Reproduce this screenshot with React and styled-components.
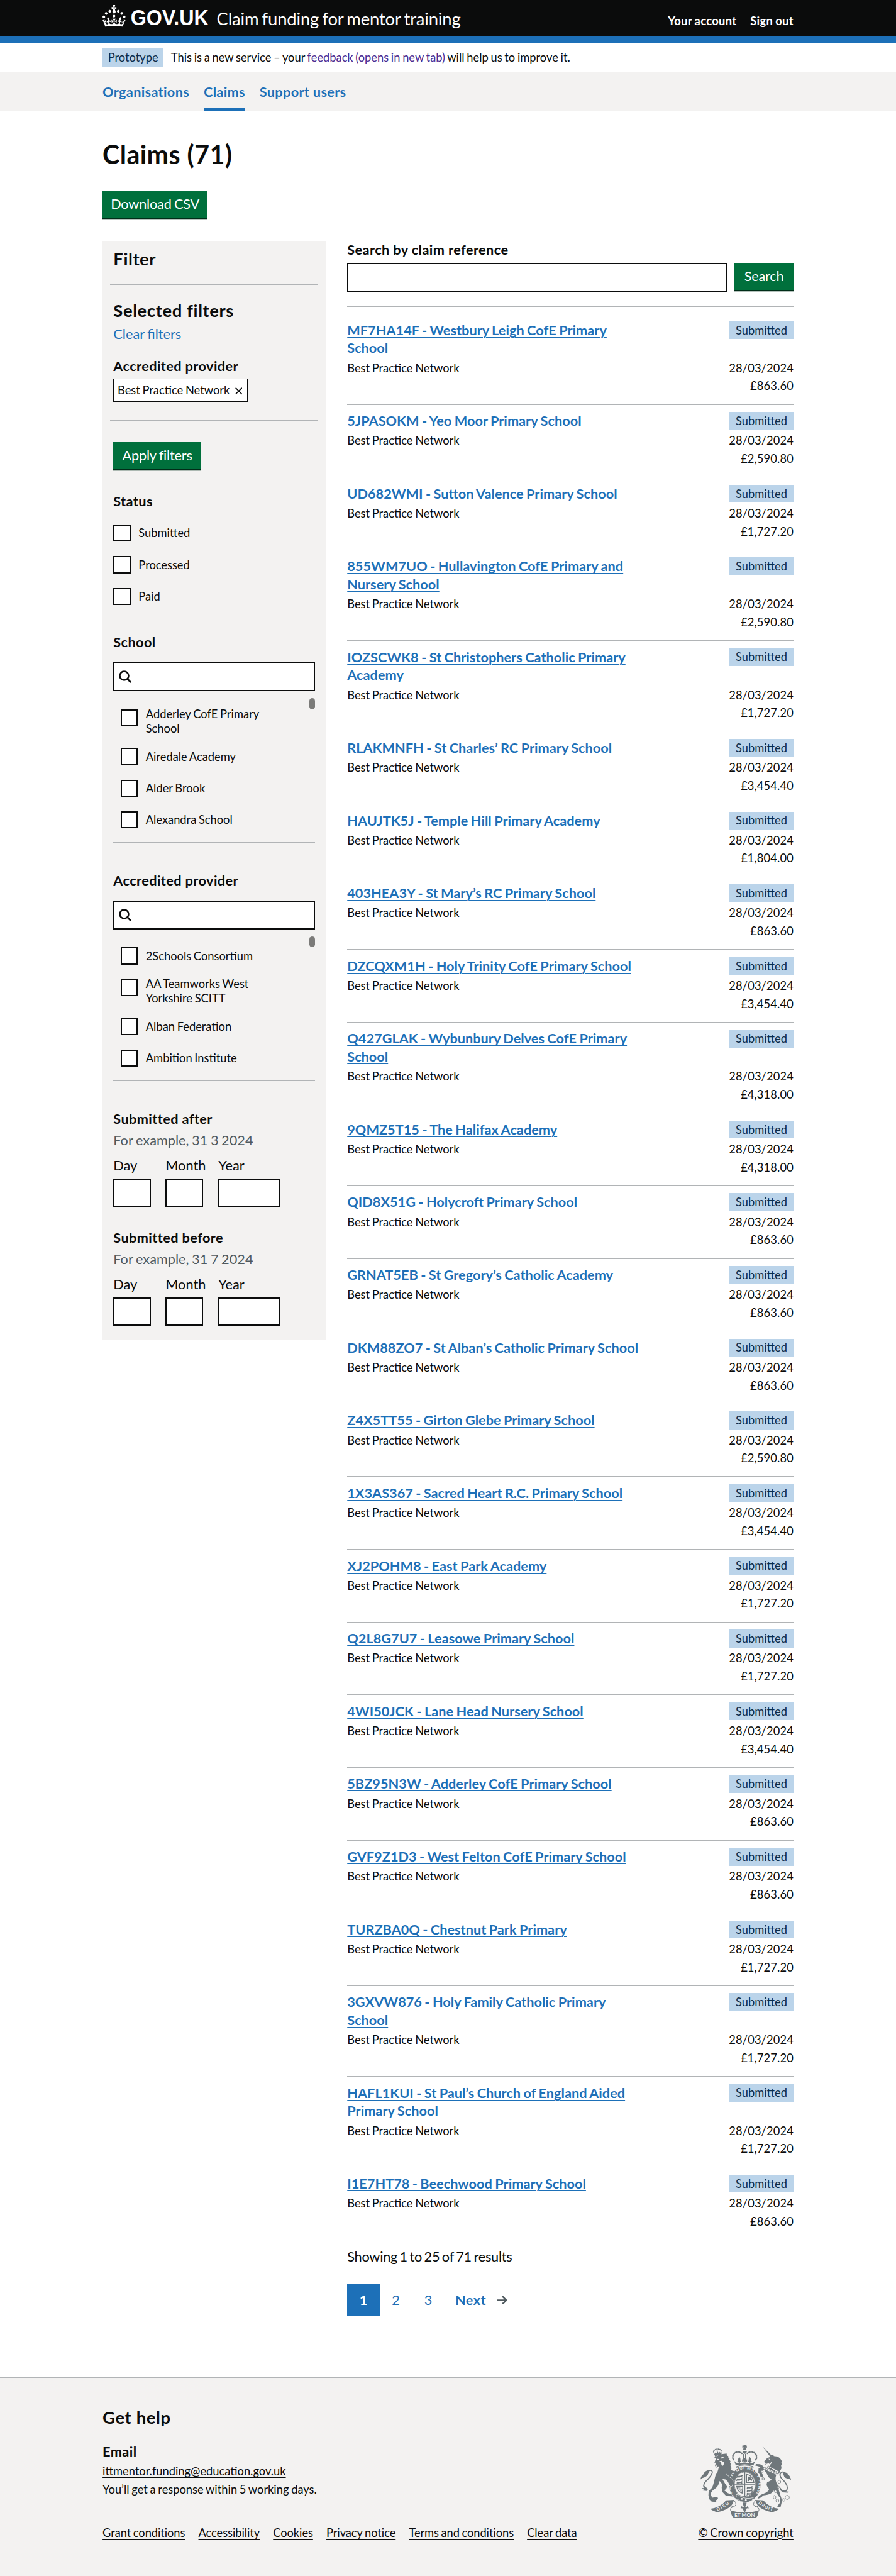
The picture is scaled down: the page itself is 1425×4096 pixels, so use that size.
import React from "react";
import styled, { createGlobalStyle, css } from "styled-components";

/* 1rem = 10 design pixels */
const Global = createGlobalStyle`
  html { font-size: 11.4458px; -webkit-text-size-adjust: none; }
  body {
    margin: 0;
    background: #fff;
    color: #0b0c0c;
    font-family: Lato, "Noto Sans", sans-serif;
    font-size: 1.9rem;
    line-height: 2.5rem;
    word-spacing: -0.045em;
  }
  *, *::before, *::after { box-sizing: border-box; }
  h1, h2, h3, p, ul { margin: 0; padding: 0; }
  ul { list-style: none; }
`;

const Width = styled.div`
  width: 96rem;
  margin: 0 auto;
`;

const underlined = css`
  text-decoration: underline;
  text-decoration-thickness: 1px;
  text-underline-offset: 0.1578em;
`;

/* ---------- header ---------- */
const Header = styled.header`
  height: 6rem;
  background: #0b0c0c;
  border-bottom: 1rem solid #1d70b8;
  color: #fff;
`;
const HeaderRow = styled(Width)`
  display: flex;
  align-items: flex-start;
`;
const Logo = styled.svg`
  display: block;
  width: 14.8rem;
  height: 3rem;
  margin-top: 0.7rem;
  flex: none;
  overflow: visible;
`;
const ServiceName = styled.span`
  margin: 1.15rem 0 0 1.05rem;
  font-size: 2.4rem;
  line-height: 3rem;
  letter-spacing: -0.006em;
  word-spacing: -0.06em;
  white-space: nowrap;
`;
const Account = styled.nav`
  display: flex;
  gap: 1.9rem;
  margin: 1.95rem 0 0 auto;
  font-size: 1.6rem;
  line-height: 2rem;
  font-weight: 700;
  letter-spacing: 0.02em;
`;

/* ---------- phase banner ---------- */
const Phase = styled(Width)`
  height: 4rem;
  display: flex;
  align-items: center;
  gap: 1rem;
  font-size: 1.6rem;
  line-height: 2rem;
`;
const Tag = styled.strong`
  display: inline-flex;
  align-items: center;
  justify-content: center;
  width: ${(p) => p.$w};
  height: 2.5rem;
  flex: none;
  background: #bbd4ea;
  color: #0c2d4a;
  font-size: 1.6rem;
  line-height: 2rem;
  font-weight: 400;
`;
const Feedback = styled.a`
  ${underlined}
  color: #4c2c92;
`;

/* ---------- primary navigation ---------- */
const NavBar = styled.nav`
  height: 5.5rem;
  background: #f3f2f1;
`;
const NavRow = styled(Width)`
  display: flex;
  gap: 2rem;
  height: 100%;
`;
const NavLink = styled.a`
  display: flex;
  align-items: center;
  height: 100%;
  padding-top: ${(p) => (p.$current ? "0.5rem" : "0")};
  border-bottom: ${(p) => (p.$current ? "0.5rem solid #1d70b8" : "0")};
  color: #1d70b8;
  font-weight: 700;
  letter-spacing: 0.014em;
  word-spacing: 0;
`;

/* ---------- shared ---------- */
const Main = styled.main`
  padding-top: 4rem;
`;
const Title = styled.h1`
  margin-bottom: 3rem;
  font-size: 3.6rem;
  line-height: 4rem;
  font-weight: 700;
  letter-spacing: 0.01em;
  word-spacing: 0;
`;
const Button = styled.button`
  display: flex;
  align-items: center;
  justify-content: center;
  width: ${(p) => p.$w};
  height: ${(p) => p.$h || "3.8rem"};
  margin: 0;
  padding: 0;
  flex: none;
  border: 0;
  background: #00703c;
  box-shadow: 0 0.2rem 0 #002d18;
  color: #fff;
  font: inherit;
  line-height: 1.9rem;
  word-spacing: inherit;
  letter-spacing: -0.01em;
`;
const Columns = styled.div`
  display: flex;
  align-items: flex-start;
  gap: 3rem;
  margin-top: 3.2rem;
`;
const Heading = styled.h2`
  font-size: ${(p) => (p.$large ? "2.4rem" : "1.9rem")};
  line-height: ${(p) => (p.$large ? "3rem" : "2.5rem")};
  font-weight: 700;
  letter-spacing: ${(p) => (p.$large ? "0.022em" : "0.018em")};
  word-spacing: 0;
`;
const Box = styled.input`
  display: block;
  width: ${(p) => p.$w};
  height: 4rem;
  margin: 0;
  padding: 0.5rem;
  border: 0.2rem solid #0b0c0c;
  border-radius: 0;
  background: #fff;
`;

/* ---------- filter panel ---------- */
const Filter = styled.aside`
  width: 31rem;
  flex: none;
  padding: 1rem 1rem 2rem;
  background: #f3f2f1;
`;
const FilterHead = styled.div`
  padding: 0 0.5rem 2rem;
  border-bottom: 1px solid #b1b4b6;
`;
const Selected = styled.div`
  padding: 2.05rem 0.5rem 2.5rem;
  border-bottom: 1px solid #b1b4b6;
`;
const ClearLink = styled.a`
  ${underlined}
  display: inline-block;
  margin: 0.5rem 0 2rem;
  color: #1d70b8;
`;
const Chip = styled.span`
  display: flex;
  align-items: center;
  gap: 0.75rem;
  width: 18.7rem;
  height: 3.2rem;
  margin-top: 0.5rem;
  padding: 0 0.5rem;
  border: 1px solid #0b0c0c;
  background: #fff;
  font-size: 1.6rem;
  line-height: 2rem;
  white-space: nowrap;
`;
const Cross = styled.svg`
  width: 1rem;
  height: 1rem;
  margin-top: 0.2rem;
`;
const Options = styled.div`
  padding: 3rem 0.5rem 0;
`;
const Group = styled.fieldset`
  margin: 0;
  padding: 0;
  border: 0;
  min-width: 0;
`;
const StatusGroup = styled(Group)`
  margin: 3.2rem 0 2.95rem;
`;
const StatusList = styled.ul`
  margin-top: 0.95rem;
`;
const SearchGroup = styled(Group)`
  margin-bottom: 4rem;
`;
const SearchBox = styled.div`
  display: flex;
  align-items: center;
  height: 4rem;
  margin: 1.5rem 0 1rem;
  padding-left: 0.6rem;
  border: 0.2rem solid #0b0c0c;
  background: #fff;
`;
const Scroller = styled.div`
  display: flex;
  justify-content: space-between;
  height: 20.1rem;
  padding-left: 1rem;
  border-bottom: 1px solid #b1b4b6;
`;
const ScrollList = styled.ul`
  padding-top: 0.5rem;
`;
const Thumb = styled.span`
  width: 0.75rem;
  height: 1.5rem;
  border-radius: 0.4rem;
  background: #7b7b79;
`;
const Item = styled.li`
  display: flex;
  min-height: 4.4rem;
`;
const Check = styled.span`
  width: 2.4rem;
  height: 2.4rem;
  margin-top: 1rem;
  flex: none;
  border: 0.2rem solid #0b0c0c;
  background: #fff;
`;
const CheckLabel = styled.label`
  align-self: center;
  padding: 0.7rem 0 0.7rem 1.1rem;
  font-size: 1.6rem;
  line-height: 2rem;
  white-space: pre;
`;
const DateGroup = styled(Group)`
  & + & { margin-top: 3rem; }
`;
const Hint = styled.p`
  margin: 0.5rem 0 1rem;
  color: #505a5f;
`;
const DateRow = styled.div`
  display: flex;
  gap: 2rem;
`;
const DateField = styled.div`
  display: flex;
  flex-direction: column;
  gap: 0.5rem;
  width: ${(p) => p.$w};
`;

/* ---------- results ---------- */
const Results = styled.section`
  flex: 1;
  min-width: 0;
`;
const SearchRow = styled.div`
  display: flex;
  justify-content: space-between;
  margin: 0.5rem 0 2.05rem;
`;
const ClaimList = styled.ul`
  padding-top: 1rem;
  border-top: 1px solid #b1b4b6;
`;
const Claim = styled.li`
  padding: 1rem 0;
  border-bottom: 1px solid #b1b4b6;
  height: ${(p) => (p.$tall ? "12.604rem" : "10.104rem")};
`;
const ClaimRow = styled.div`
  display: flex;
  justify-content: space-between;
  align-items: flex-start;
  margin-bottom: 0.5rem;
`;
const ClaimLink = styled.a`
  ${underlined}
  color: #1d70b8;
  font-weight: 700;
  word-spacing: -0.04em;
  white-space: pre;
`;
const Meta = styled.span`
  font-size: 1.6rem;
  line-height: 2rem;
  letter-spacing: ${(p) => (p.$num ? "0.006em" : "0")};
`;
const Amount = styled(Meta)`
  display: block;
  text-align: right;
`;
const Showing = styled.p`
  margin: 1.05rem 0 2.5rem;
  letter-spacing: -0.012em;
  word-spacing: -0.08em;
`;
const Pages = styled.nav`
  display: flex;
  align-items: center;
  height: 4.5rem;
`;
const Page = styled.a`
  ${underlined}
  display: flex;
  align-items: center;
  justify-content: center;
  width: 4.5rem;
  height: 4.5rem;
  background: ${(p) => (p.$current ? "#1d70b8" : "transparent")};
  color: ${(p) => (p.$current ? "#fff" : "#1d70b8")};
  font-weight: ${(p) => (p.$current ? 700 : 400)};
`;
const Next = styled.a`
  ${underlined}
  margin: 0 1.5rem;
  color: #1d70b8;
  font-weight: 700;
  letter-spacing: 0.02em;
`;
const Arrow = styled.svg`
  width: 1.5rem;
  height: 1.3rem;
`;

/* ---------- footer ---------- */
const Footer = styled.footer`
  height: 27.6rem;
  margin-top: 8.5rem;
  padding-top: 4rem;
  border-top: 1px solid #b1b4b6;
  background: #f3f2f1;
`;
const FooterRow = styled(Width)`
  display: flex;
  justify-content: space-between;
`;
const FooterBody = styled.div`
  display: flex;
  flex-direction: column;
  align-items: flex-start;
  font-size: 1.6rem;
  line-height: 2rem;
`;
const EmailHeading = styled(Heading)`
  margin: 2rem 0 0.5rem;
`;
const FooterLink = styled.a`
  ${underlined}
  color: #0b0c0c;
`;
const Reply = styled.p`
  margin: 0.5rem 0 4rem;
`;
const FooterLinks = styled.div`
  display: flex;
  gap: 1.85rem;
  letter-spacing: -0.004em;
`;
const Licence = styled.div`
  display: flex;
  flex-direction: column;
  align-items: center;
  margin-top: 5.25rem;
  font-size: 1.6rem;
  line-height: 2rem;
`;
const Crest = styled.svg`
  display: block;
  width: 12.6rem;
  height: 10.25rem;
  margin-bottom: 1rem;
`;

const crown =
  "M22.6 10.4c-1 .4-2-.1-2.4-1-.4-.9.1-2 1-2.4.9-.4 2 .1 2.4 1s-.1 2-1 2.4m-5.9 6.7c-.9.4-2-.1-2.4-1-.4-.9.1-2 1-2.4.9-.4 2 .1 2.4 1s-.1 2-1 2.4m10.8-3.7c-1 .4-2-.1-2.4-1-.4-.9.1-2 1-2.4.9-.4 2 .1 2.4 1s0 2-1 2.4m3.3 4.8c-1 .4-2-.1-2.4-1-.4-.9.1-2 1-2.4.9-.4 2 .1 2.4 1s-.1 2-1 2.4M17 4.7l2.3 1.2V2.5l-2.3.7-.2-.2.9-3h-3.4l.9 3-.2.2c-.1.1-2.3-.7-2.3-.7v3.4L15 4.7c.1.1.1.2.2.2l-1.3 4c-.1.2-.1.4-.1.6 0 1.1.8 2 1.9 2.2h.7c1-.2 1.9-1.1 1.9-2.1 0-.2 0-.4-.1-.6l-1.3-4c-.1-.2 0-.2.1-.3m-7.6 5.7c.9.4 2-.1 2.4-1 .4-.9-.1-2-1-2.4-.9-.4-2 .1-2.4 1s0 2 1 2.4m-5 3c.9.4 2-.1 2.4-1 .4-.9-.1-2-1-2.4-.9-.4-2 .1-2.4 1s.1 2 1 2.4m-3.2 4.8c.9.4 2-.1 2.4-1 .4-.9-.1-2-1-2.4-.9-.4-2 .1-2.4 1s0 2 1 2.4m14.8 11c4.4 0 8.6.3 12.3.8 1.1-4.5 2.4-7 3.7-8.8l-2.5-.9c.2 1.3.3 1.9 0 2.7-.4-.4-.8-1.1-1.1-2.3l-1.2 4c.7-.5 1.3-.8 2-.9-1.1 2.5-2.6 3.1-3.5 3-1.1-.2-1.7-1.2-1.5-2.1.3-1.2 1.5-1.5 2.1-.1 1.1-2.3-.8-3-2-2.3 1.9-1.9 2.1-3.5.6-5.6-2.1 1.6-2.1 3.2-1.2 5.5-1.2-1.4-3.2-.6-2.5 1.6.9-1.4 2.1-.5 1.9.8-.2 1.1-1.7 2.1-3.5 1.9-2.7-.2-2.9-2.1-2.9-3.6.7-.1 1.9.5 2.9 1.9l.4-4.3c-1.1 1.1-2.1 1.4-3.2 1.4.4-1.2 2.1-3 2.1-3h-5.4s1.7 1.9 2.1 3c-1.1 0-2.1-.2-3.2-1.4l.4 4.3c1-1.4 2.2-2 2.9-1.9-.1 1.5-.2 3.4-2.9 3.6-1.9.2-3.4-.8-3.5-1.9-.2-1.3 1-2.2 1.9-.8.7-2.3-1.2-3-2.5-1.6.9-2.2.9-3.9-1.2-5.5-1.5 2-1.3 3.7.6 5.6-1.2-.7-3.1 0-2 2.3.6-1.4 1.8-1.1 2.1.1.2.9-.3 1.9-1.5 2.1-.9.2-2.4-.5-3.5-3 .6 0 1.2.3 2 .9l-1.2-4c-.3 1.1-.7 1.9-1.1 2.3-.3-.8-.2-1.4 0-2.7l-2.9.9C1.3 23 2.6 25.5 3.7 30c3.7-.5 7.9-.8 12.3-.8";

const claims = [
  ["MF7HA14F - Westbury Leigh CofE Primary\nSchool", "863.60"],
  ["5JPASOKM - Yeo Moor Primary School", "2,590.80"],
  ["UD682WMI - Sutton Valence Primary School", "1,727.20"],
  ["855WM7UO - Hullavington CofE Primary and\nNursery School", "2,590.80"],
  ["IOZSCWK8 - St Christophers Catholic Primary\nAcademy", "1,727.20"],
  ["RLAKMNFH - St Charles’ RC Primary School", "3,454.40"],
  ["HAUJTK5J - Temple Hill Primary Academy", "1,804.00"],
  ["403HEA3Y - St Mary’s RC Primary School", "863.60"],
  ["DZCQXM1H - Holy Trinity CofE Primary School", "3,454.40"],
  ["Q427GLAK - Wybunbury Delves CofE Primary\nSchool", "4,318.00"],
  ["9QMZ5T15 - The Halifax Academy", "4,318.00"],
  ["QID8X51G - Holycroft Primary School", "863.60"],
  ["GRNAT5EB - St Gregory’s Catholic Academy", "863.60"],
  ["DKM88ZO7 - St Alban’s Catholic Primary School", "863.60"],
  ["Z4X5TT55 - Girton Glebe Primary School", "2,590.80"],
  ["1X3AS367 - Sacred Heart R.C. Primary School", "3,454.40"],
  ["XJ2POHM8 - East Park Academy", "1,727.20"],
  ["Q2L8G7U7 - Leasowe Primary School", "1,727.20"],
  ["4WI50JCK - Lane Head Nursery School", "3,454.40"],
  ["5BZ95N3W - Adderley CofE Primary School", "863.60"],
  ["GVF9Z1D3 - West Felton CofE Primary School", "863.60"],
  ["TURZBA0Q - Chestnut Park Primary", "1,727.20"],
  ["3GXVW876 - Holy Family Catholic Primary\nSchool", "1,727.20"],
  ["HAFL1KUI - St Paul’s Church of England Aided\nPrimary School", "1,727.20"],
  ["I1E7HT78 - Beechwood Primary School", "863.60"],
];

const CheckItem = ({ children }) => (
  <Item>
    <Check />
    <CheckLabel>{children}</CheckLabel>
  </Item>
);

const SearchableList = ({ title, items }) => (
  <SearchGroup>
    <Heading>{title}</Heading>
    <SearchBox>
      <svg width="20" height="20" viewBox="0 0 17.4 17.4" fill="none" stroke="#0b0c0c" strokeWidth="2.2">
        <circle cx="7.4" cy="7.4" r="6.1" />
        <path d="M11.6 11.6l5 5" strokeWidth="2.4" />
      </svg>
    </SearchBox>
    <Scroller>
      <ScrollList>
        {items.map((t) => (
          <CheckItem key={t}>{t}</CheckItem>
        ))}
      </ScrollList>
      <Thumb />
    </Scroller>
  </SearchGroup>
);

const DateInput = ({ title, hint }) => (
  <DateGroup>
    <Heading>{title}</Heading>
    <Hint>{hint}</Hint>
    <DateRow>
      <DateField $w="5.25rem">Day<Box $w="5.25rem" /></DateField>
      <DateField $w="5.35rem">Month<Box $w="5.25rem" /></DateField>
      <DateField $w="8.6rem">Year<Box $w="8.6rem" /></DateField>
    </DateRow>
  </DateGroup>
);

const ring = (n, cx, cy, rx, ry, from, to, r) =>
  Array.from({ length: n }, (_, i) => {
    const a = ((from + ((to - from) * i) / (n - 1)) * Math.PI) / 180;
    return <circle key={`${cx}-${i}`} cx={cx + rx * Math.cos(a)} cy={cy + ry * Math.sin(a)} r={r} />;
  });

const Lions = ({ x, y }) => (
  <g transform={`translate(${x} ${y})`}>
    {[0, 25, 50].map((dy) => (
      <path
        key={dy}
        transform={`translate(0 ${dy})`}
        d="M0 4l8-4 7 5 16-1 8-6 9 2 3 6-8 3 2 5 8 4-10 1-9-6-12 3 4 5-9 1-3-7-7 1-4 6-8-2 6-6z"
      />
    ))}
  </g>
);

const RoyalArms = () => (
  <Crest viewBox="54 80 727 592" preserveAspectRatio="none" fill="#6f777b">
    <defs>
      <path id="garter" d="M328 498 C282 452 286 356 328 312 C372 266 452 266 494 316 C534 362 534 448 466 516" />
      <path id="left-motto" d="M190 613 Q240 594 292 549" />
      <path id="right-motto" d="M517 551 Q568 598 632 612" />
    </defs>

    {/* crown */}
    <path d="M396 81h24l-4 10 10-4v20l-10-5 4 22h-24l4-22-10 5V87l10 4zM391 136h35q-4 17-17 19-14-2-18-19z" />
    {ring(12, 356, 180, 43, 41, 150, 315, 6.4)}
    {ring(12, 461, 180, 43, 41, 30, -135, 6.4)}
    <path d="M397 156h7v30h-7zM412 156h7v30h-7zM390 188h36l-8 12 10-2v20l-12-6 2 12h-20l2-12-12 6v-20l10 2z" />
    <path d="M366 178l9 18-3 10 10 8-10 6-2 8h-9l-2-8-10-6 9-8-2-10zM450 178l9 18-3 10 10 8-10 6-2 8h-9l-2-8-10-6 9-8-2-10z" />
    <path d="M322 206q10 18 24 22l62 4 62-4q14-4 25-22l-17 42q-70-18-140 0z" />
    <path d="M343 256q66-22 133 0 4 6-2 12-64-20-130 0-4-6-1-12z" fill="none" stroke="#6f777b" strokeWidth="5" />

    {/* garter and shield */}
    <ellipse cx="410" cy="400" rx="105" ry="121" fill="none" stroke="#6f777b" strokeWidth="42" />
    <ellipse cx="410" cy="400" rx="86" ry="101" fill="#f3f2f1" />
    <ellipse cx="410" cy="400" rx="84" ry="99" fill="none" stroke="#6f777b" strokeWidth="4" />
    <path d="M406 300h7v196h-7zM325 396h168v6H325z" />
    <path d="M400 492h20l8 14h-36z" />
    <Lions x={344} y={326} />
    <Lions x={426} y={416} />
    <path d="M421 316q56 6 66 72h-66zm6 8v56h52q-10-48-52-56z" fillRule="evenodd" />
    <path d="M434 332l12 10 8-6 4 14 12 6-4 16-14-8-10 10-12-2 8-10-6-10z" />
    <path d="M340 412h56l-4 62q-42-8-52-62zm8 6q8 36 38 46l4-46z" fillRule="evenodd" />
    <path d="M354 418l26 42M364 418l20 38M374 418l14 32" stroke="#6f777b" strokeWidth="3" />
    <path d="M340 482q16-8 26 8 50 34 112 16l-10 22q-56 34-108-4-18 4-24-12 10-6 4-30z" stroke="#f3f2f1" strokeWidth="4" />
    <g fill="#f3f2f1"><circle cx="386" cy="516" r="7" /><circle cx="418" cy="525" r="7" /></g>
    <text fill="#f3f2f1" fontFamily="Lato, sans-serif" fontWeight="700" fontSize="31">
      <textPath href="#garter" textLength="560" lengthAdjust="spacing">HONI SOIT QUI MAL Y PENSE</textPath>
    </text>

    {/* lion */}
    {ring(9, 192, 138, 33, 22, 175, 345, 5)}
    <path d="M160 146l8 8 8-12 8 10 8-16 8 14 10-12 4 10 10-6-2 22q-30-2-50 12zM184 108h8v20h-8z" />
    <path d="M168 182q30-24 96-30l2 16 12 4-4 8 14 14-6 4 14 16-8 4 14 22-10 2 12 28-6 10 12 10q18 0 14 10-22 14-24 30l24 30-6 34-8 26-20-10-16-32-18-18-26-4 20 34 18 28q-4 18-22 30l28 22 30 10 8 16-26-2-28-4-30-32-4-36 6-22-22-28q-10 50-44 66-30 20-26 52l14 16 22-6 22 8-8 14-12 6 6 12-38-2-20-20-6-30 2-38q30-14 38-54l16-66 18-36 14-46-24 22 4-24-16 8 8-30-12 4 12-38-14-6z" />
    <g fill="#f3f2f1">
      <path d="M184 194l18 2-4 8-12-2zM220 184l22-6-6 12-12 4zM206 212l18-2 18 12-2 18q-8 20-18 0l-2-12z" />
    </g>
    <path d="M262 318l54 46-4 44-14 14-18-22" fill="none" stroke="#f3f2f1" strokeWidth="4" />
    <path d="M92 440q-26-32 4-64 66-64 50-84-8-12-28 2" fill="none" stroke="#6f777b" strokeWidth="9" />
    <path d="M54 360q4-30 24-42 8-28 46-34-4 46-36 58-20 4-34 18zM84 410l30 26-8 16-36-4 10-6-14-14 20 2z" />

    {/* unicorn */}
    <path d="M552 95l76 76-14 8z" />
    <path d="M566 214l22-24 26-12 22-20 6 14q42 2 56 26l10 18-6 2 4 22-6 4 4 26-12 22-8 24-60-40-22-8 8-20-8-18-16 4-14 10 8-16-10 6z" />
    <path d="M600 194l12 2-8 6zM630 196q-2 30-34 44l4 8q30-8 30-52z" fill="#f3f2f1" />
    <path d="M596 250l88 44-14 24-84-42z" fill="#f3f2f1" stroke="#6f777b" strokeWidth="4" />
    <path d="M606 262l10 8 6-4 4 12 10-2 4 12 12-6 2 14 16-4-8 14-64-32z" />
    <path d="M578 282l84 40q-16 40 10 80l12 50 10 30 12 40-2 26-8 34-28 2 10-20 14-18-2-40-30-42-20-14-18 20q-20 14-62 18l-24 18-26 10 14-24 16-10 44-18 20-20-6-20q-20-14-10-40l38-22-24-18-14-26-20-32-22-4-8 20 16 20 4 22-22-2-4-18-14-18 2-36 18-10-30-8-20-6 14-10 30 2 24 14 10 16z" />
    <g fill="#f3f2f1" stroke="#6f777b" strokeWidth="4">
      <circle cx="568" cy="272" r="10" /><circle cx="549" cy="298" r="9" /><circle cx="557" cy="355" r="10" />
      <circle cx="686" cy="379" r="12" /><circle cx="678" cy="422" r="9" /><circle cx="655" cy="456" r="10" />
      <ellipse cx="648" cy="502" rx="11" ry="14" /><circle cx="671" cy="530" r="12" />
      <circle cx="720" cy="524" r="11" /><circle cx="750" cy="504" r="17" />
    </g>
    <path d="M716 450q34 14 34-24 0-30-42-70-28-30-8-50 12-12 30 0" fill="none" stroke="#6f777b" strokeWidth="9" />
    <path d="M780 366q-4-34-24-44-8-20-42-22 4 44 36 54 20 2 30 12zM694 424l22 28 50 6-12 8-40-2-22-20z" />

    {/* motto ribbon */}
    <path d="M130 596q84-10 130-68l64-4-18 40q-36 44-118 58-16 0-58-26z" />
    <path d="M688 596q-84-10-130-68l-66-4 18 40q36 44 118 58 18 0 60-26z" />
    <path d="M326 530q30 40-14 52-26 8-14 34M492 530q-30 40 14 52 26 8 14 34M300 530q-18 44 18 50M520 530q18 44-18 50" fill="none" stroke="#6f777b" strokeWidth="5" />
    <path d="M298 610q112 32 222 0 0 36-18 54-92 18-186 0-18-18-18-54z" />
    <path d="M394 546h30l-4 24h-22zM408 564l12 22 10-12q14 8 8 22-8-8-14-2l-6 12-6 16h-8l-6-16-6-12q-6-6-14 2-6-14 8-22l10 12z" />
    <g fill="#f3f2f1" fontFamily="Lato, sans-serif" fontWeight="700" fontSize="34">
      <text><textPath href="#left-motto" textLength="112">DIEU</textPath></text>
      <text><textPath href="#right-motto" textLength="130">DROIT</textPath></text>
      <text x="326" y="658" fontSize="42" textLength="166" lengthAdjust="spacingAndGlyphs">ET MON</text>
    </g>
  </Crest>
);

export default function App() {
  return (
    <>
      <Global />
      <Header>
        <HeaderRow>
          <Logo viewBox="0 0 148 30" fill="#fff">
            <path d={crown} />
            <text x="39" y="28.1" fontFamily="Liberation Sans, Arial, sans-serif" fontWeight="700" fontSize="30.2" wordSpacing="0" textLength="108.5" lengthAdjust="spacingAndGlyphs">GOV.UK</text>
          </Logo>
          <ServiceName>Claim funding for mentor training</ServiceName>
          <Account>
            <span>Your account</span>
            <span>Sign out</span>
          </Account>
        </HeaderRow>
      </Header>
      <Phase>
        <Tag $w="8.5rem">Prototype</Tag>
        <span>This is a new service – your <Feedback>feedback (opens in new tab)</Feedback> will help us to improve it.</span>
      </Phase>
      <NavBar>
        <NavRow>
          <NavLink>Organisations</NavLink>
          <NavLink $current>Claims</NavLink>
          <NavLink>Support users</NavLink>
        </NavRow>
      </NavBar>

      <Main>
        <Width>
          <Title>Claims (71)</Title>
          <Button $w="14.6rem">Download CSV</Button>
          <Columns>
            <Filter>
              <FilterHead><Heading $large>Filter</Heading></FilterHead>
              <Selected>
                <Heading $large>Selected filters</Heading>
                <ClearLink>Clear filters</ClearLink>
                <Heading>Accredited provider</Heading>
                <Chip>
                  Best Practice Network
                  <Cross viewBox="0 0 10 10" stroke="#0b0c0c" strokeWidth="1.5">
                    <path d="M.6.6l8.8 8.8M9.4.6L.6 9.4" />
                  </Cross>
                </Chip>
              </Selected>
              <Options>
                <Button $w="12.2rem">Apply filters</Button>
                <StatusGroup>
                  <Heading>Status</Heading>
                  <StatusList>
                    <CheckItem>Submitted</CheckItem>
                    <CheckItem>Processed</CheckItem>
                    <CheckItem>Paid</CheckItem>
                  </StatusList>
                </StatusGroup>
                <SearchableList
                  title="School"
                  items={["Adderley CofE Primary\nSchool", "Airedale Academy", "Alder Brook", "Alexandra School"]}
                />
                <SearchableList
                  title="Accredited provider"
                  items={["2Schools Consortium", "AA Teamworks West\nYorkshire SCITT", "Alban Federation", "Ambition Institute"]}
                />
                <DateInput title="Submitted after" hint="For example, 31 3 2024" />
                <DateInput title="Submitted before" hint="For example, 31 7 2024" />
              </Options>
            </Filter>

            <Results>
              <Heading>Search by claim reference</Heading>
              <SearchRow>
                <Box $w="52.8rem" />
                <Button $w="8.2rem">Search</Button>
              </SearchRow>
              <ClaimList>
                {claims.map(([title, amount]) => (
                  <Claim key={title} $tall={title.includes("\n")}>
                    <ClaimRow>
                      <ClaimLink>{title}</ClaimLink>
                      <Tag $w="8.9rem">Submitted</Tag>
                    </ClaimRow>
                    <ClaimRow>
                      <Meta>Best Practice Network</Meta>
                      <Meta $num>28/03/2024</Meta>
                    </ClaimRow>
                    <Amount $num>£{amount}</Amount>
                  </Claim>
                ))}
              </ClaimList>
              <Showing>Showing 1 to 25 of 71 results</Showing>
              <Pages>
                <Page $current>1</Page>
                <Page>2</Page>
                <Page>3</Page>
                <Next>Next</Next>
                <Arrow viewBox="0 0 15 13" fill="none" stroke="#505a5f" strokeWidth="2.2">
                  <path d="M0 6.5h13M7.6.8l5.7 5.7-5.7 5.7" />
                </Arrow>
              </Pages>
            </Results>
          </Columns>
        </Width>
      </Main>

      <Footer>
        <FooterRow>
          <FooterBody>
            <Heading $large>Get help</Heading>
            <EmailHeading as="h3">Email</EmailHeading>
            <FooterLink>ittmentor.funding@education.gov.uk</FooterLink>
            <Reply>You’ll get a response within 5 working days.</Reply>
            <FooterLinks>
              <FooterLink>Grant conditions</FooterLink>
              <FooterLink>Accessibility</FooterLink>
              <FooterLink>Cookies</FooterLink>
              <FooterLink>Privacy notice</FooterLink>
              <FooterLink>Terms and conditions</FooterLink>
              <FooterLink>Clear data</FooterLink>
            </FooterLinks>
          </FooterBody>
          <Licence>
            <RoyalArms />
            <FooterLink>© Crown copyright</FooterLink>
          </Licence>
        </FooterRow>
      </Footer>
    </>
  );
}
